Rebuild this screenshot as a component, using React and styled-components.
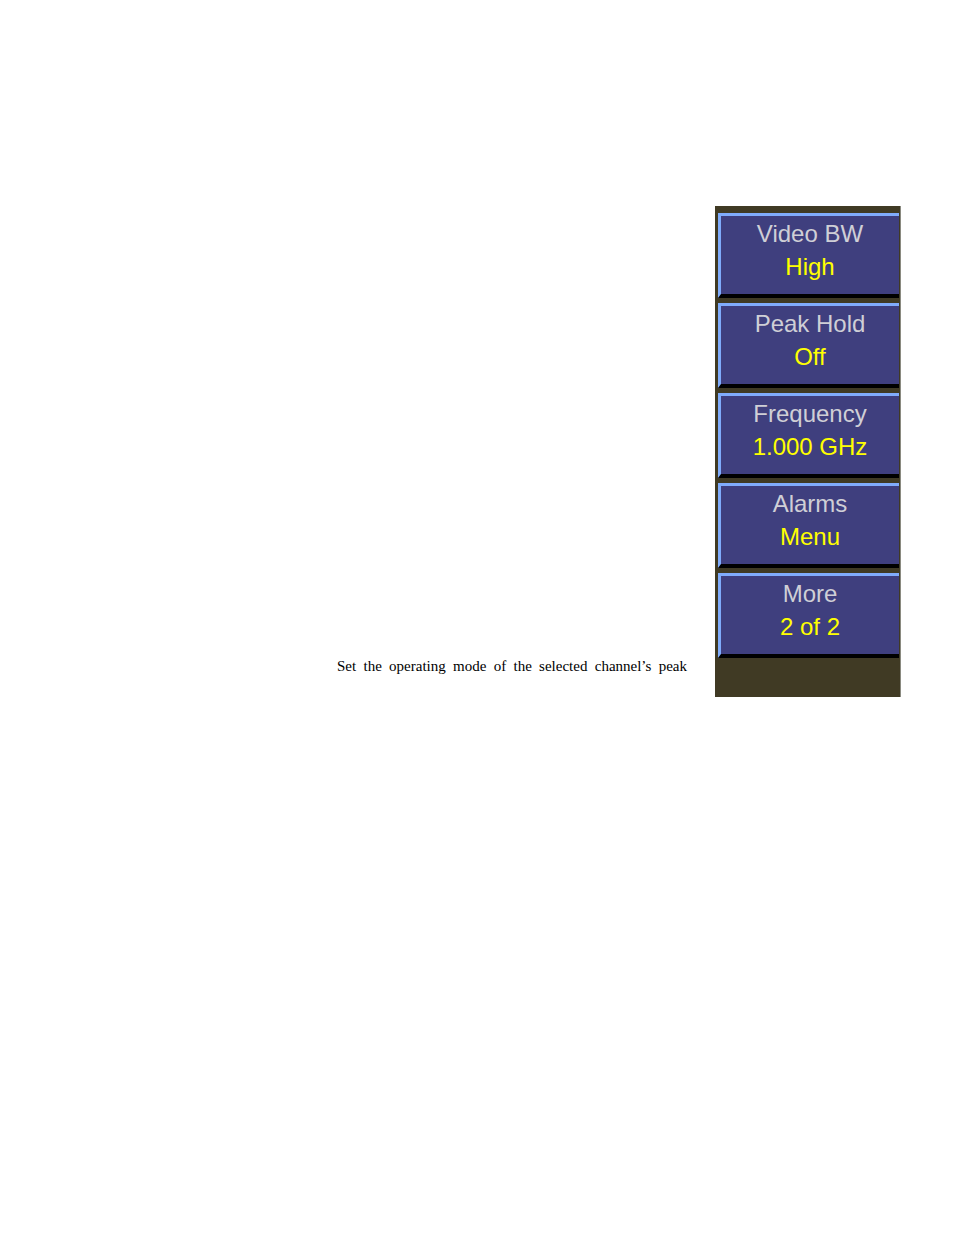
import styled, { createGlobalStyle } from 'styled-components';

const GlobalStyle = createGlobalStyle`
  body {
    margin: 0;
    background: #ffffff;
  }
`;

const Page = styled.div`
  padding: 206px 0 0 337px;
  height: 1235px;
  box-sizing: border-box;
`;

const Row = styled.div`
  display: flex;
  align-items: flex-end;
`;

const Caption = styled.p`
  width: 350px;
  margin: 0 28px 22px 0;
  font-family: "Liberation Serif", "Times New Roman", serif;
  font-size: 15px;
  line-height: 18px;
  color: #000;
  text-align: justify;
  text-align-last: justify;
`;

const SoftKeys = styled.div`
  display: flex;
  flex-direction: column;
  gap: 5px;
  width: 186px;
  height: 491px;
  box-sizing: border-box;
  padding: 7px 1px 0 3px;
  background: #403a24;
  border-right: 1px solid #8a8a80;
`;

const Key = styled.div`
  height: 85px;
  box-sizing: border-box;
  border-top: 3px solid #80acfc;
  border-left: 3px solid #80acfc;
  border-bottom: 4px solid #000;
  background: #3f3f7e;
  display: flex;
  flex-direction: column;
  align-items: center;
  padding-top: 1px;
  font-family: "Liberation Sans", Arial, sans-serif;
  font-size: 24px;
  line-height: 33px;
`;

const Label = styled.span`
  color: #cfcfd6;
`;

const Value = styled.span`
  color: #ffff00;
`;

const keys = [
  { label: 'Video BW', value: 'High' },
  { label: 'Peak Hold', value: 'Off' },
  { label: 'Frequency', value: '1.000 GHz' },
  { label: 'Alarms', value: 'Menu' },
  { label: 'More', value: '2 of 2' },
];

const App = () => {
  return (
    <>
      <GlobalStyle />
      <Page>
        <Row>
          <Caption>Set the operating mode of the selected channel’s peak</Caption>
          <SoftKeys>
            {keys.map((k) => (
              <Key key={k.label}>
                <Label>{k.label}</Label>
                <Value>{k.value}</Value>
              </Key>
            ))}
          </SoftKeys>
        </Row>
      </Page>
    </>
  );
};

export default App;
